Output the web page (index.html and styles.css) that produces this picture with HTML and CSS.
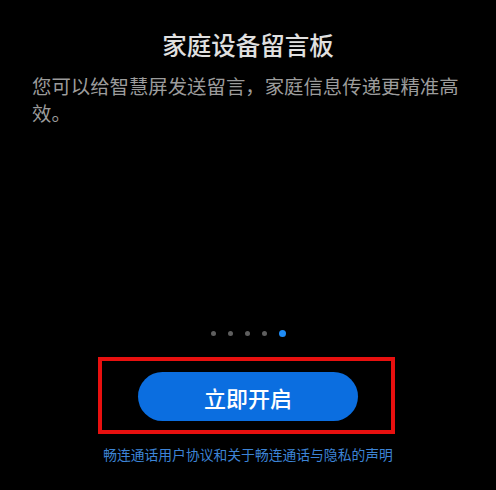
FILE: index.html
```html
<!DOCTYPE html>
<html lang="zh-CN">
<head>
<meta charset="utf-8">
<link rel="stylesheet" href="styles.css">
</head>
<body>
<div class="page">
  <h1 class="title">家庭设备留言板</h1>
  <p class="desc">您可以给智慧屏发送留言，家庭信息传递更精准高效。</p>
  <div class="dots">
    <span class="dot"></span>
    <span class="dot"></span>
    <span class="dot"></span>
    <span class="dot"></span>
    <span class="dot active"></span>
  </div>
  <div class="highlight">
    <button class="btn">立即开启</button>
  </div>
  <div class="link">畅连通话用户协议和关于畅连通话与隐私的声明</div>
</div>
</body>
</html>
```
FILE: styles.css
```css
html, body {
  margin: 0;
  padding: 0;
  background: #000;
}
body {
  width: 496px;
  height: 490px;
  overflow: hidden;
  font-family: "Noto Sans CJK SC", "Noto Sans", sans-serif;
}
.page {
  display: flex;
  flex-direction: column;
  padding-top: 30px;
}
.title {
  margin: 0;
  font-size: 24.5px;
  line-height: 30px;
  font-weight: 500;
  color: #e0e0e0;
  text-align: center;
}
.desc {
  margin: 12px 0 0;
  padding: 0 32px;
  font-size: 19.4px;
  line-height: 27px;
  color: #9c9c9c;
}
.dots {
  margin-top: 204px;
  display: flex;
  justify-content: center;
  align-items: center;
  gap: 12px;
  height: 7px;
}
.dot {
  width: 5px;
  height: 5px;
  border-radius: 50%;
  background: #5e5e5e;
}
.dot.active {
  width: 7px;
  height: 7px;
  background: #1f8cf5;
}
.highlight {
  margin: 20px 0 0 98px;
  width: 220px;
  border: 4px solid #e8100f;
  padding: 11px 33px 9px 36px;
  box-sizing: content-box;
  display: flex;
}
.btn {
  width: 220px;
  height: 49px;
  border: none;
  border-radius: 25px;
  background: #0b6ee0;
  color: #fff;
  font-family: "Noto Sans CJK SC", sans-serif;
  font-size: 22px;
  font-weight: 500;
  padding: 0;
}
.link {
  margin-top: 11px;
  text-align: center;
  font-size: 13.8px;
  line-height: 18px;
  color: #3d84d6;
}
```
